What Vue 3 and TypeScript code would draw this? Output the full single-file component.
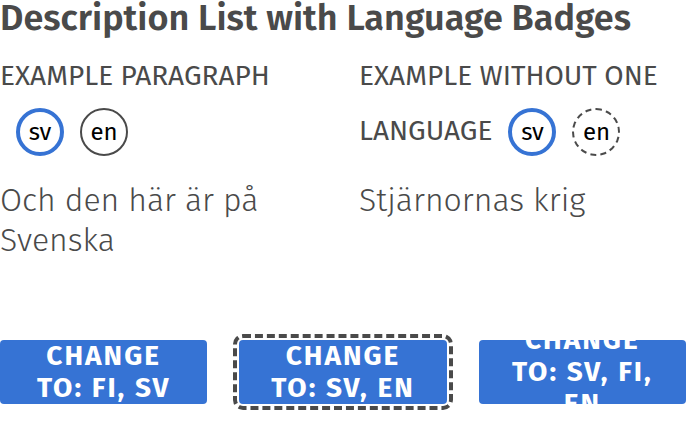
<script setup lang="ts">
type BadgeState = 'active' | 'available' | 'missing'

interface Badge {
  code: string
  state: BadgeState
}

interface Entry {
  term: string
  text: string
  badges: Badge[]
}

interface Choice {
  languages: string[]
  focused: boolean
}

const entries: Entry[] = [
  {
    term: 'Example paragraph',
    text: 'Och den här är på Svenska',
    badges: [
      { code: 'sv', state: 'active' },
      { code: 'en', state: 'available' },
    ],
  },
  {
    term: 'Example without one language',
    text: 'Stjärnornas krig',
    badges: [
      { code: 'sv', state: 'active' },
      { code: 'en', state: 'missing' },
    ],
  },
]

const choices: Choice[] = [
  { languages: ['fi', 'sv'], focused: false },
  { languages: ['sv', 'en'], focused: true },
  { languages: ['sv', 'fi', 'en'], focused: false },
]
</script>

<template>
  <main class="page">
    <h1 class="title">Description List with Language Badges</h1>
    <dl class="list">
      <div v-for="entry in entries" :key="entry.term">
        <dt class="term">
          {{ entry.term }}<wbr><span class="badges">
            <button
              v-for="badge in entry.badges"
              :key="badge.code"
              type="button"
              class="badge"
              :class="badge.state"
            >{{ badge.code }}</button>
          </span>
        </dt>
        <dd class="text">{{ entry.text }}</dd>
      </div>
    </dl>
    <div class="actions">
      <button
        v-for="choice in choices"
        :key="choice.languages.join()"
        type="button"
        class="action"
        :class="{ focused: choice.focused }"
      >
        <span>Change to: {{ choice.languages.join(', ') }}</span>
      </button>
    </div>
  </main>
</template>

<style>
body {
  background: #fff;
}
</style>

<style scoped>
.page {
  padding-bottom: 32px;
  color: #4a4a4a;
  font-family: 'Fira Sans', 'Noto Sans', sans-serif;
}

.title {
  margin: 0;
  padding-bottom: 12px;
  font-size: 36px;
  font-weight: 600;
  line-height: 36px;
}

.list {
  display: grid;
  grid-template-columns: 1fr 1fr;
  gap: 32px;
  margin: 0 0 80px;
}

.term {
  margin-bottom: 22px;
  font-size: 28px;
  line-height: 55px;
  text-transform: uppercase;
}

.badges {
  display: inline-flex;
  gap: 16px;
  margin-left: 16px;
}

.badge {
  width: 48px;
  height: 48px;
  padding: 0;
  border: 2px solid #4a4a4a;
  border-radius: 50%;
  background: #fff;
  color: #000;
  font-family: inherit;
  font-size: 24px;
  line-height: 32px;
}

.badge.active {
  border: 4px solid #3673d4;
}

.badge.missing {
  border-style: dashed;
}

.text {
  margin: 0;
  font-size: 32px;
  font-weight: 300;
  line-height: 40px;
}

.actions {
  display: grid;
  grid-template-columns: repeat(3, 1fr);
  gap: 32px;
}

.action {
  display: flex;
  align-items: center;
  justify-content: center;
  height: 64px;
  padding: 0 28px;
  overflow: hidden;
  border: 0;
  border-radius: 4px;
  background: #3673d4;
  color: #fff;
  font-family: inherit;
  font-size: 28px;
  font-weight: 700;
  letter-spacing: 2px;
  line-height: 32px;
  text-transform: uppercase;
}

.action.focused {
  outline: 4px dashed #4a4a4a;
  outline-offset: 2px;
}
</style>
